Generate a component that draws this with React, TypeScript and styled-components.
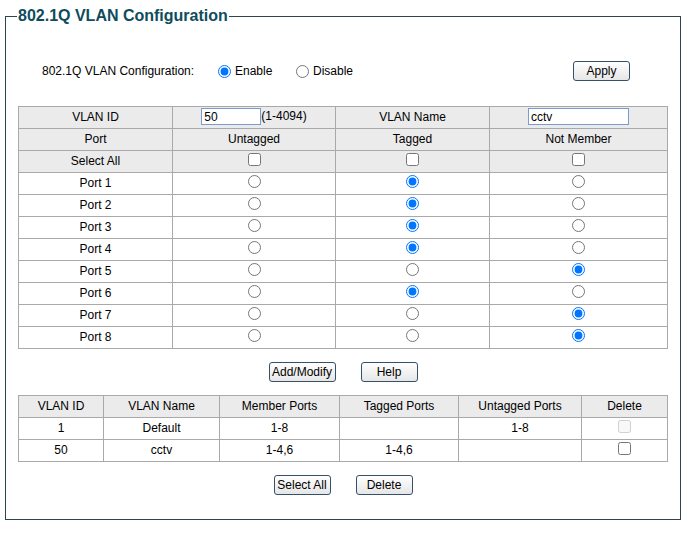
import React from 'react'
import styled, { createGlobalStyle } from 'styled-components'

const GlobalStyle = createGlobalStyle`
  body {
    margin: 0;
    background: #fff;
    font-family: 'Liberation Sans', Arial, sans-serif;
    font-size: 12px;
    color: #000;
  }
`

const Frame = styled.fieldset`
  margin: 6px 0 0 5px;
  width: 650px;
  padding: 0 12px 11px 12px;
  border: 1px solid #2f444c;
  min-width: 0;
`

const Legend = styled.legend`
  padding: 0 1px;
  margin-left: -1px;
  font-size: 16px;
  line-height: 20px;
  font-weight: bold;
  color: #0f4c5c;
`

const ConfigRow = styled.div`
  display: flex;
  align-items: center;
  height: 20px;
  margin: 35px 0 25px;
`

const ConfigLabel = styled.span`
  width: 176px;
  padding-left: 24px;
`

const RadioGroup = styled.label<{ width?: number }>`
  display: flex;
  align-items: center;
  gap: 4px;
  width: ${({ width }) => (width ? `${width}px` : 'auto')};
`

const Radio = styled.input.attrs({ type: 'radio' })<{ cell?: boolean }>`
  margin: 0;
  width: 13px;
  height: 13px;
  ${({ cell }) => (cell ? 'display: block; margin: -2px auto 0;' : '')}
`

const Check = styled.input.attrs({ type: 'checkbox' })`
  display: block;
  margin: -2px auto 0;
  width: 13px;
  height: 13px;
`

const Button = styled.button<{ width?: number }>`
  width: ${({ width }) => width || 57}px;
  height: 20px;
  padding: 0;
  border: 1px solid #34506b;
  border-radius: 3px;
  background: linear-gradient(#ffffff, #e6e6e6);
  font-family: 'Liberation Sans', Arial, sans-serif;
  font-size: 12px;
  color: #000;
`

const ApplyButton = styled(Button)`
  margin-left: auto;
  margin-right: 38px;
`

const ButtonRow = styled.div`
  display: flex;
  justify-content: center;
  gap: 25px;
  height: 20px;
  margin: 13px 0;
`

const Grid = styled.table`
  width: 650px;
  table-layout: fixed;
  border-collapse: collapse;
  border: 1px solid #a9a9a9;
`

const Cell = styled.td<{ head?: boolean }>`
  height: 19px;
  padding: 0 0 2px;
  border: 1px solid #a9a9a9;
  text-align: center;
  vertical-align: middle;
  line-height: 14px;
  background: ${({ head }) => (head ? '#ebebeb' : '#fff')};
`

const TextBox = styled.input.attrs({ type: 'text' })<{ width: number }>`
  box-sizing: border-box;
  width: ${({ width }) => width}px;
  height: 17px;
  margin: 0;
  padding: 0 2px;
  border: 1px solid #7a9bcf;
  font-family: 'Liberation Sans', Arial, sans-serif;
  font-size: 12px;
  vertical-align: middle;
`

const ports = [
  { name: 'Port 1', state: 1 },
  { name: 'Port 2', state: 1 },
  { name: 'Port 3', state: 1 },
  { name: 'Port 4', state: 1 },
  { name: 'Port 5', state: 2 },
  { name: 'Port 6', state: 1 },
  { name: 'Port 7', state: 2 },
  { name: 'Port 8', state: 2 },
]

const vlans = [
  { id: '1', name: 'Default', member: '1-8', tagged: '', untagged: '1-8', locked: true },
  { id: '50', name: 'cctv', member: '1-4,6', tagged: '1-4,6', untagged: '', locked: false },
]

export default function App() {
  return (
    <>
      <GlobalStyle />
      <Frame>
        <Legend>802.1Q VLAN Configuration</Legend>
        <ConfigRow>
          <ConfigLabel>802.1Q VLAN Configuration:</ConfigLabel>
          <RadioGroup width={78}>
            <Radio name="state" defaultChecked />
            Enable
          </RadioGroup>
          <RadioGroup>
            <Radio name="state" />
            Disable
          </RadioGroup>
          <ApplyButton>Apply</ApplyButton>
        </ConfigRow>

        <Grid>
          <colgroup>
            <col style={{ width: 154 }} />
            <col style={{ width: 163 }} />
            <col style={{ width: 154 }} />
            <col style={{ width: 178 }} />
          </colgroup>
          <tbody>
            <tr>
              <Cell head>VLAN ID</Cell>
              <Cell head>
                <TextBox width={60} defaultValue="50" />
                (1-4094)
              </Cell>
              <Cell head>VLAN Name</Cell>
              <Cell head>
                <TextBox width={101} defaultValue="cctv" />
              </Cell>
            </tr>
            <tr>
              <Cell head>Port</Cell>
              <Cell head>Untagged</Cell>
              <Cell head>Tagged</Cell>
              <Cell head>Not Member</Cell>
            </tr>
            <tr>
              <Cell head>Select All</Cell>
              <Cell head><Check /></Cell>
              <Cell head><Check /></Cell>
              <Cell head><Check /></Cell>
            </tr>
            {ports.map((p, i) => (
              <tr key={p.name}>
                <Cell>{p.name}</Cell>
                {[0, 1, 2].map((s) => (
                  <Cell key={s}>
                    <Radio cell name={`port${i}`} defaultChecked={p.state === s} />
                  </Cell>
                ))}
              </tr>
            ))}
          </tbody>
        </Grid>

        <ButtonRow>
          <Button width={67}>Add/Modify</Button>
          <Button>Help</Button>
        </ButtonRow>

        <Grid>
          <colgroup>
            <col style={{ width: 85 }} />
            <col style={{ width: 116 }} />
            <col style={{ width: 120 }} />
            <col style={{ width: 119 }} />
            <col style={{ width: 123 }} />
            <col style={{ width: 86 }} />
          </colgroup>
          <tbody>
            <tr>
              <Cell head>VLAN ID</Cell>
              <Cell head>VLAN Name</Cell>
              <Cell head>Member Ports</Cell>
              <Cell head>Tagged Ports</Cell>
              <Cell head>Untagged Ports</Cell>
              <Cell head>Delete</Cell>
            </tr>
            {vlans.map((v) => (
              <tr key={v.id}>
                <Cell>{v.id}</Cell>
                <Cell>{v.name}</Cell>
                <Cell>{v.member}</Cell>
                <Cell>{v.tagged}</Cell>
                <Cell>{v.untagged}</Cell>
                <Cell><Check disabled={v.locked} /></Cell>
              </tr>
            ))}
          </tbody>
        </Grid>

        <ButtonRow>
          <Button>Select All</Button>
          <Button>Delete</Button>
        </ButtonRow>
      </Frame>
    </>
  )
}
